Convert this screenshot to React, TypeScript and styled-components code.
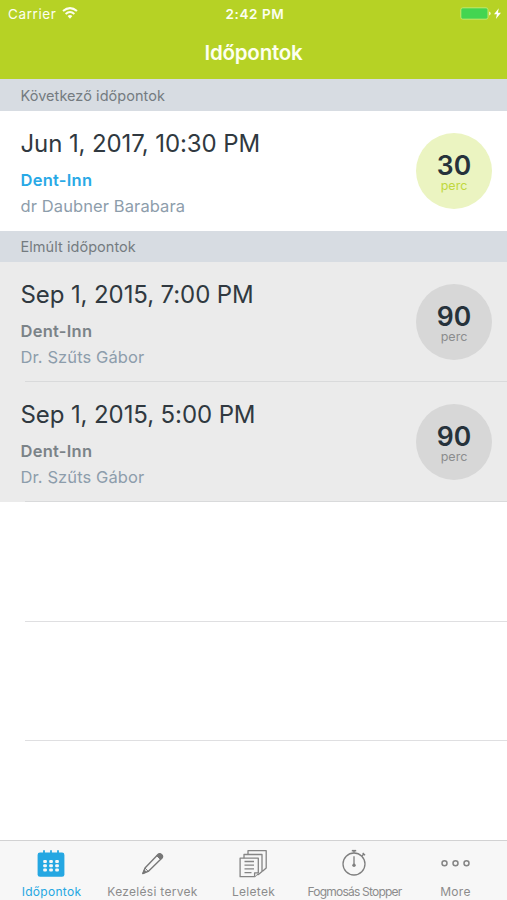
import React from "react";
import styled, { createGlobalStyle, css } from "styled-components";

const GlobalStyle = createGlobalStyle`
  * { box-sizing: border-box; }
  html, body { margin: 0; padding: 0; background: #fff; }
  body { font-family: Inter, "Liberation Sans", sans-serif; font-kerning: normal; }
`;

const Screen = styled.div`
  width: 507px;
  height: 900px;
  display: flex;
  flex-direction: column;
  overflow: hidden;
  background: #fff;
`;

const TopBar = styled.header`
  height: 79px;
  flex: none;
  background: #b6d225;
  color: #fdfff0;
`;

const StatusBar = styled.div`
  height: 27px;
  display: grid;
  grid-template-columns: 1fr auto 1fr;
  align-items: center;
  padding: 1px 5px 0 8px;
  font-size: 13.5px;
  line-height: 26px;
`;

const Carrier = styled.div`
  display: flex;
  align-items: center;
  gap: 6px;
  letter-spacing: 0.6px;
  svg { margin-top: -2px; }
`;

const Clock = styled.div`
  font-weight: 600;
  font-size: 13.5px;
  letter-spacing: 0.6px;
`;

const Power = styled.div`
  display: flex;
  justify-content: flex-end;
`;

const Title = styled.h1`
  margin: 0;
  height: 52px;
  line-height: 51px;
  text-align: center;
  font-size: 20.5px;
  font-weight: 600;
  letter-spacing: -0.2px;
`;

const SectionHeader = styled.h2<{ $height: number }>`
  margin: 0;
  height: ${(p) => p.$height}px;
  flex: none;
  padding-left: 20.5px;
  background: #d7dce2;
  color: #747b80;
  font-size: 14.5px;
  font-weight: 400;
  line-height: ${(p) => (p.$height === 32 ? 33 : 31)}px;
  letter-spacing: 0.05px;
`;

const Row = styled.article<{ $past?: boolean }>`
  height: 120px;
  flex: none;
  display: flex;
  justify-content: space-between;
  padding: 17px 15px 0 20.5px;
  background: ${(p) => (p.$past ? "#ebebeb" : "#fff")};
  ${(p) =>
    p.$past &&
    css`
      background-image: linear-gradient(#d9dadb, #d9dadb);
      background-size: calc(100% - 25px) 1px;
      background-position: right bottom;
      background-repeat: no-repeat;
    `}
`;

const EmptyRow = styled.div<{ $height: number }>`
  height: ${(p) => p.$height}px;
  flex: none;
  margin-left: 25px;
  border-bottom: 1px solid #dfdfe1;
`;

const DateText = styled.div`
  font-size: 24px;
  line-height: 32px;
  color: #303940;
  letter-spacing: -0.1px;
  white-space: nowrap;
`;

const Clinic = styled.div<{ $past?: boolean }>`
  margin-top: 8px;
  font-size: 16.5px;
  line-height: 25px;
  font-weight: 600;
  letter-spacing: 0.25px;
  color: ${(p) => (p.$past ? "#7b8388" : "#29a9e6")};
`;

const Doctor = styled.div`
  font-size: 16.5px;
  line-height: 26px;
  letter-spacing: 0.1px;
  color: #8d9dab;
`;

const Badge = styled.div<{ $past?: boolean }>`
  width: 76px;
  height: 76px;
  margin-top: 5px;
  border-radius: 50%;
  display: flex;
  flex-direction: column;
  align-items: center;
  background: ${(p) => (p.$past ? "#d7d7d7" : "#ebf4c1")};
  color: ${(p) => (p.$past ? "#8b8d8e" : "#c0d83d")};
  font-size: 12.5px;
  line-height: 12px;
  padding-top: 18px;
`;

const Minutes = styled.strong`
  color: #26323b;
  font-size: 26.5px;
  line-height: 29px;
  font-weight: 600;
`;

const TabBar = styled.nav`
  height: 60px;
  flex: none;
  margin-top: auto;
  display: grid;
  grid-template-columns: repeat(5, 101px);
  border-top: 1px solid #d2d2d3;
  background: #f7f7f7;
`;

const Tab = styled.div<{ $active?: boolean; $spacing?: number }>`
  display: flex;
  flex-direction: column;
  align-items: center;
  padding-top: 7px;
  color: ${(p) => (p.$active ? "#25a7e2" : "#8c8c8c")};
  font-size: 12px;
  line-height: 18px;
  white-space: nowrap;
  letter-spacing: ${(p) => p.$spacing ?? 0.3}px;
  svg { display: block; margin-bottom: 3px; flex: none; }
`;

const TabLabel = styled.span`
  padding-left: 2px;
`;

const WifiIcon = () => (
  <svg width="16" height="12" viewBox="0 0 16 12" fill="none" stroke="currentColor">
    <path d="M1 4.1Q8-1.8 15 4.1" strokeWidth="2" />
    <path d="M3.6 6.9Q8 3.2 12.4 6.9" strokeWidth="1.9" />
    <path d="M5.6 9Q8 7.1 10.4 9L8 11.7Z" fill="currentColor" stroke="none" />
  </svg>
);

const BatteryIcon = () => (
  <svg width="42" height="14" viewBox="0 0 42 14">
    <rect x=".8" y=".8" width="27.2" height="11.4" rx="2" fill="#43d551" stroke="#c5e86b" />
    <path d="M29 4.5Q30.8 4.8 30.8 6.5T29 8.5Z" fill="#e8f5b5" />
    <path d="m38.8 1.2-4.8 6h2.9l-1 4.9 5.1-6.4h-3.1Z" fill="#fff" />
  </svg>
);

const CalendarIcon = () => (
  <svg width="30" height="32" viewBox="0 0 30 32" fill="currentColor">
    <path d="M4 4.5h22q2.4 0 2.4 2.4v19.5q0 2.400-2.400 2.400H4q-2.400 0-2.400-2.400V6.900Q1.600 4.500 4 4.500Z" />
    {[8, 15, 22].map((x) => (
      <path key={x} d={`M${x} 2.2v4`} stroke="currentColor" strokeWidth="1.8" />
    ))}
    {[12, 16.3, 20.6].map((y) =>
      [7.2, 13.2, 19.2].map((x) => (
        <rect key={`${x}-${y}`} x={x} y={y} width="3.7" height="2.9" rx="1" fill="#f7f7f7" />
      )),
    )}
  </svg>
);

const PencilIcon = () => (
  <svg width="30" height="32" viewBox="-1 0 30 32" fill="none" stroke="#777" strokeWidth="1.4" strokeLinejoin="round">
    <path d="m4.800 25.600 2.200-5.600L20.200 6.300q1.500-1.300 3.300.3t.5 3.500L10.200 23.400Z" />
    <path d="m7 20 3.200 3.400" strokeWidth="1" />
    <path d="m4.800 25.600 1.500-3.600 2 2ZM18.800 7.800l1.400-1.500q1.500-1.300 3.300.3t.5 3.500l-1.500 1.400Z" fill="#777" strokeWidth="1" />
  </svg>
);

const DocumentsIcon = () => (
  <svg width="30" height="32" viewBox="-.5 0 30 32" fill="#f7f7f7" stroke="#858585" strokeWidth="1.3" strokeLinejoin="round">
    <path d="M9.500 2.700h18.200v17.200l-3.400 3H9.500Z" />
    <path d="M5.500 6.500h18v17.100l-3.600 3H5.500Z" />
    <path d="M1.600 10.200h18.200v14.700l-3.700 3.800H1.600Z" />
    <path d="M16.100 28.700v-3.800h3.700M6 13.500h9.500M6 17.200h9.500M6 20.900h9.500M6 24.600h7" />
  </svg>
);

const StopwatchIcon = () => (
  <svg width="30" height="32" viewBox="0 0 30 32" fill="none" stroke="#7f7f7f">
    <circle cx="15" cy="16" r="11" strokeWidth="1.3" />
    <path d="M15 2.800v2M15 8.300v9" strokeWidth="1.3" />
    <path d="M12.800 2.700h4.400" strokeWidth="1.6" />
    <path d="m22.900 7.900 1.800-1.800m-1-1.200 2.300 2.300" strokeWidth="1.4" />
    <circle cx="15" cy="17.3" r="1.7" fill="#7f7f7f" stroke="none" />
  </svg>
);

const MoreIcon = () => (
  <svg width="30" height="32" viewBox="0 0 30 32" fill="none" stroke="#858585" strokeWidth="1.5">
    {[4.5, 15.5, 26.5].map((x) => (
      <circle key={x} cx={x} cy="15.3" r="2.5" />
    ))}
  </svg>
);

interface AppointmentProps {
  date: string;
  doctor: string;
  minutes: number;
  past?: boolean;
}

const Appointment = ({ date, doctor, minutes, past }: AppointmentProps) => (
  <Row $past={past}>
    <div>
      <DateText>{date}</DateText>
      <Clinic $past={past}>Dent-Inn</Clinic>
      <Doctor>{doctor}</Doctor>
    </div>
    <Badge $past={past}>
      <Minutes>{minutes}</Minutes>
      perc
    </Badge>
  </Row>
);

export default function App() {
  return (
    <>
      <GlobalStyle />
      <Screen>
        <TopBar>
          <StatusBar>
            <Carrier>Carrier <WifiIcon /></Carrier>
            <Clock>2:42 PM</Clock>
            <Power><BatteryIcon /></Power>
          </StatusBar>
          <Title>Időpontok</Title>
        </TopBar>
        <SectionHeader $height={32}>Következő időpontok</SectionHeader>
        <Appointment date="Jun 1, 2017, 10:30 PM" doctor="dr Daubner Barabara" minutes={30} />
        <SectionHeader $height={31}>Elmúlt időpontok</SectionHeader>
        <Appointment date="Sep 1, 2015, 7:00 PM" doctor="Dr. Szűts Gábor" minutes={90} past />
        <Appointment date="Sep 1, 2015, 5:00 PM" doctor="Dr. Szűts Gábor" minutes={90} past />
        <EmptyRow $height={120} />
        <EmptyRow $height={119} />
        <TabBar>
          <Tab $active><CalendarIcon /><TabLabel>Időpontok</TabLabel></Tab>
          <Tab><PencilIcon /><TabLabel>Kezelési tervek</TabLabel></Tab>
          <Tab><DocumentsIcon /><TabLabel>Leletek</TabLabel></Tab>
          <Tab $spacing={-0.78}><StopwatchIcon /><TabLabel>Fogmosás Stopper</TabLabel></Tab>
          <Tab><MoreIcon /><TabLabel>More</TabLabel></Tab>
        </TabBar>
      </Screen>
    </>
  );
}
